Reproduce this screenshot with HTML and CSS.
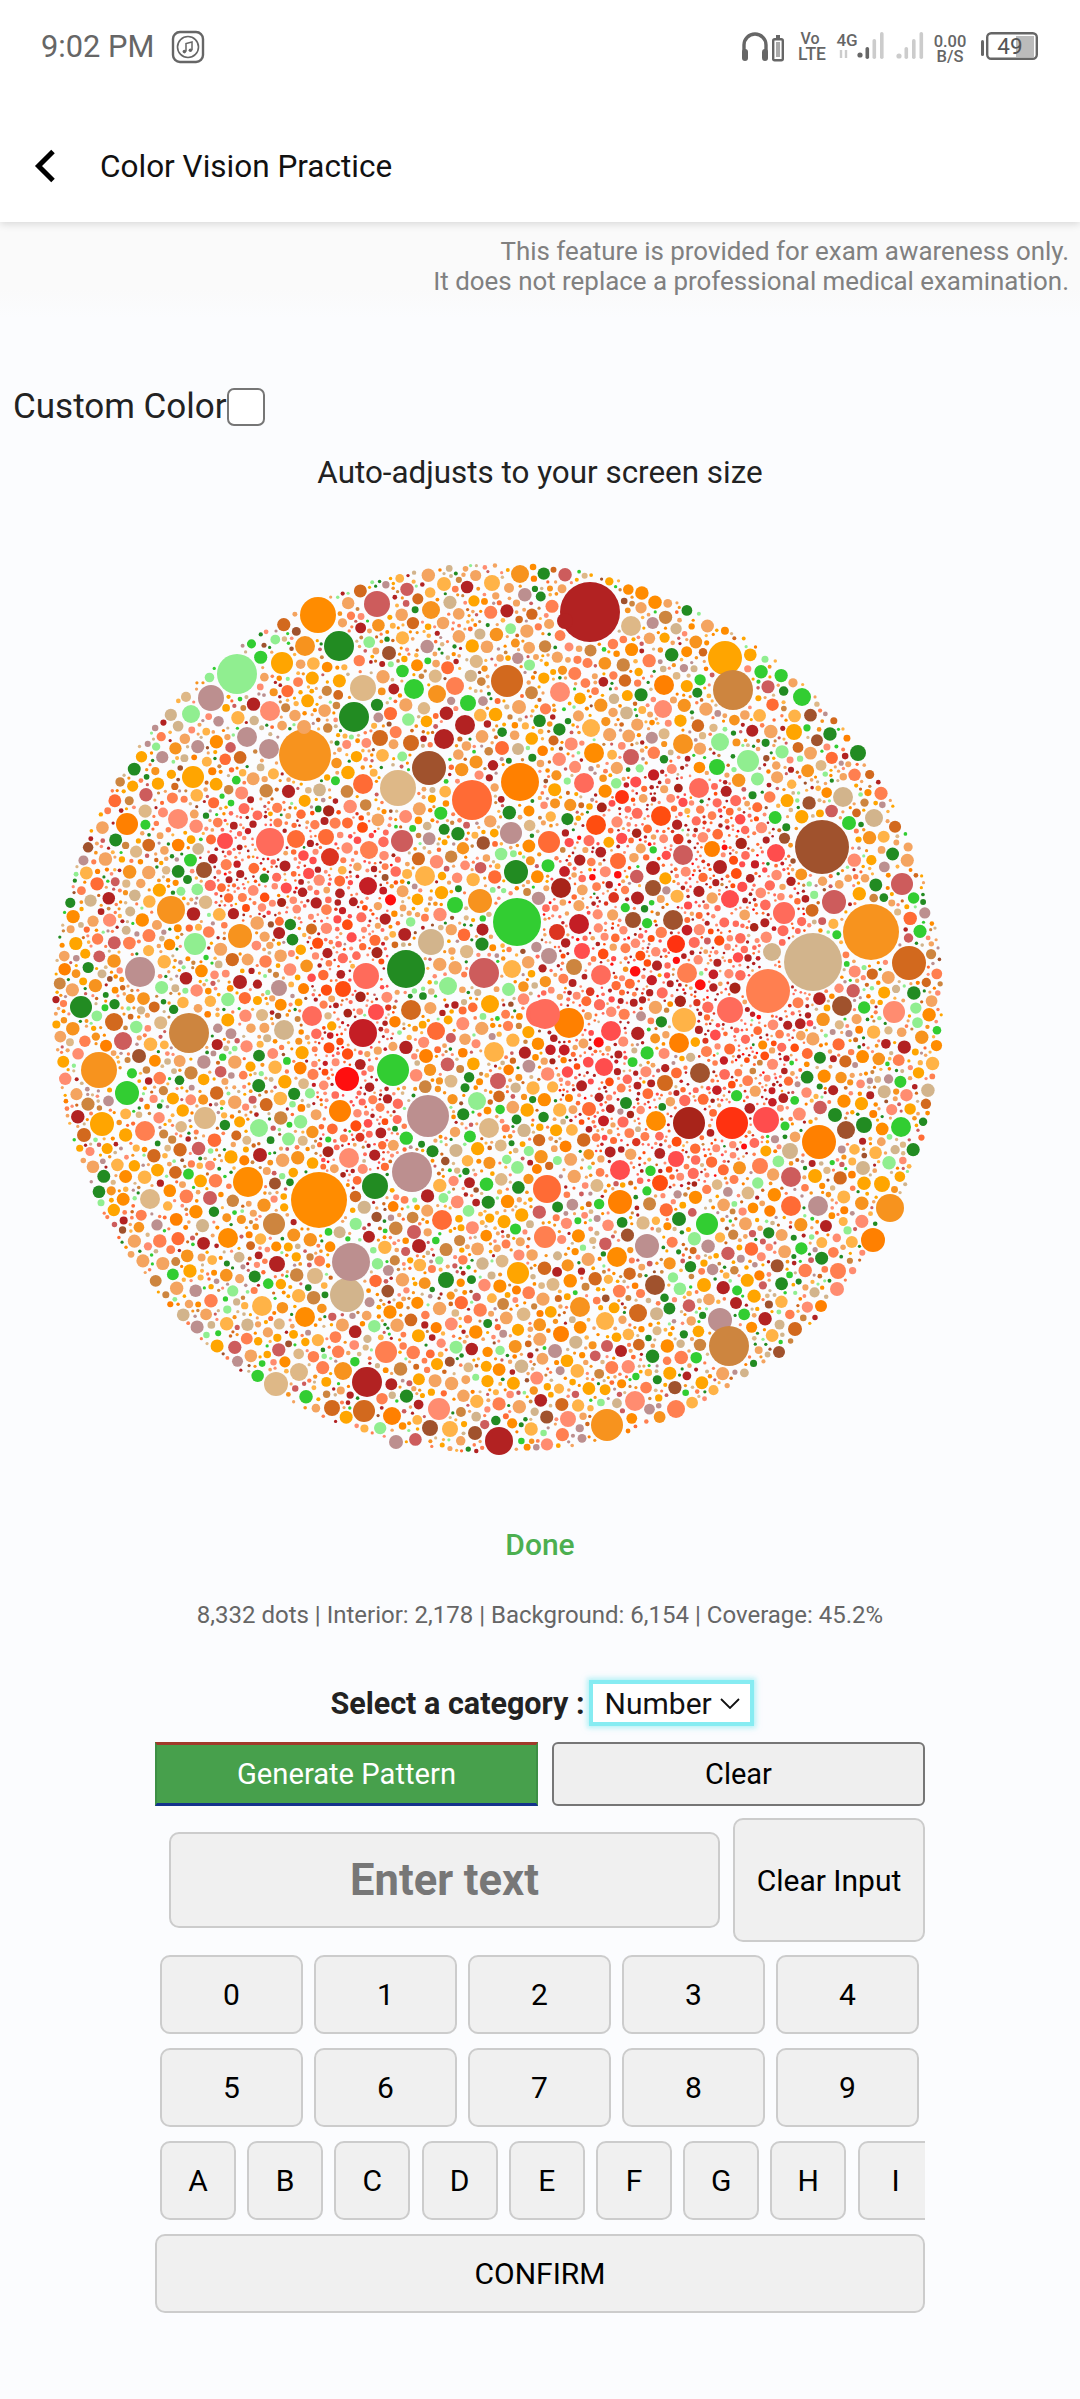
FILE: index.html
```html
<!DOCTYPE html>
<html lang="en">
<head>
<meta charset="utf-8">
<title>Color Vision Practice</title>
<link rel="stylesheet" href="styles.css">
</head>
<body>
<header class="top">
  <div class="status">
    <div class="status-left">
      <span class="time">9:02 PM</span>
      <svg class="music" width="34" height="34" viewBox="0 0 34 34" fill="none" stroke="#666">
        <rect x="2" y="2" width="30" height="30" rx="7" stroke-width="2.4"/>
        <circle cx="17" cy="17" r="10.5" stroke-width="1.6"/>
        <path d="M15 21.5V13.5l6-1.5v8" stroke-width="1.5"/>
        <circle cx="13.4" cy="21.6" r="1.8" fill="#666" stroke="none"/>
        <circle cx="19.4" cy="20.2" r="1.8" fill="#666" stroke="none"/>
      </svg>
    </div>
    <svg class="status-right" width="300" height="38" viewBox="740 28 300 38" fill="#666">
      <path d="M744 52V45a11 11 0 0 1 22 0v7" fill="none" stroke="#666" stroke-width="3.4"/>
      <rect x="742" y="49" width="6" height="12" rx="3"/>
      <rect x="762" y="49" width="6" height="12" rx="3"/>
      <rect x="776" y="35" width="4" height="3" />
      <rect x="773.2" y="39.2" width="9.6" height="21" rx="1.5" fill="none" stroke="#666" stroke-width="2.4"/>
      <rect x="776" y="42" width="4" height="15" fill="#aaa"/>
      <text class="st-text" x="810" y="43.5" text-anchor="middle" font-size="16">Vo</text>
      <text class="st-text" x="812" y="59.5" text-anchor="middle" font-size="17.5">LTE</text>
      <text class="st-text" x="847" y="45.5" text-anchor="middle" font-size="17">4G</text>
      <path d="M841 50v8M846 50v8" stroke="#ccc" stroke-width="2.4"/>
      <circle cx="860" cy="55" r="2.6"/>
      <rect x="865.5" y="47" width="3.6" height="12" rx="1.8"/>
      <rect x="872.5" y="39" width="3.6" height="20" rx="1.8" fill="#ccc"/>
      <rect x="880" y="32" width="3.6" height="27" rx="1.8" fill="#ccc"/>
      <g fill="#ccc">
        <circle cx="899" cy="56" r="2.6"/>
        <rect x="904.5" y="47" width="3.6" height="12" rx="1.8"/>
        <rect x="912" y="39" width="3.6" height="20" rx="1.8"/>
        <rect x="919.5" y="32" width="3.6" height="27" rx="1.8"/>
      </g>
      <text class="st-text" x="950" y="46.5" text-anchor="middle" font-size="16.5">0.00</text>
      <text class="st-text" x="950" y="61.5" text-anchor="middle" font-size="16.5">B/S</text>
      <rect x="981" y="40" width="3" height="16" rx="1.5"/>
      <rect x="1016" y="36" width="18" height="21" fill="#bbb"/>
      <rect x="987.2" y="33.2" width="49.6" height="25.6" rx="4" fill="none" stroke="#666" stroke-width="2.4"/>
      <text class="st-batt" x="1010" y="53.5" text-anchor="middle" font-size="22.5">49</text>
    </svg>
  </div>
  <div class="appbar">
    <svg class="back" width="24" height="34" viewBox="0 0 24 34" fill="none" stroke="#000" stroke-width="5">
      <path d="M20 2.5 5.5 17 20 31.5"/>
    </svg>
    <h1 class="title">Color Vision Practice</h1>
  </div>
</header>

<main class="content">
  <p class="notice">This feature is provided for exam awareness only.<br>It does not replace a professional medical examination.</p>
  <label class="custom">Custom Color<input class="check" type="checkbox"></label>
  <p class="hint">Auto-adjusts to your screen size</p>
  <canvas id="plate" class="plate" width="1000" height="1010"></canvas>
  <p class="done">Done</p>
  <p class="stats">8,332 dots | Interior: 2,178 | Background: 6,154 | Coverage: 45.2%</p>

  <div class="category">
    <strong class="cat-label">Select a category :</strong>
    <div class="select">Number
      <svg width="20" height="11" viewBox="0 0 20 11" fill="none" stroke="#111" stroke-width="1.8"><path d="M1 1l9 9 9-9"/></svg>
    </div>
  </div>

  <div class="panel">
    <div class="actions">
      <button class="btn-generate">Generate Pattern</button>
      <button class="btn-clear">Clear</button>
    </div>
    <div class="entry">
      <input class="text-input" placeholder="Enter text">
      <button class="key clear-input">Clear Input</button>
    </div>
    <div class="keys">
      <button class="key">0</button><button class="key">1</button><button class="key">2</button><button class="key">3</button><button class="key">4</button>
    </div>
    <div class="keys">
      <button class="key">5</button><button class="key">6</button><button class="key">7</button><button class="key">8</button><button class="key">9</button>
    </div>
    <div class="letters">
      <button class="key">A</button><button class="key">B</button><button class="key">C</button><button class="key">D</button><button class="key">E</button><button class="key">F</button><button class="key">G</button><button class="key">H</button><button class="key">I</button><button class="key">J</button><button class="key">K</button>
    </div>
    <button class="key confirm">CONFIRM</button>
  </div>
</main>
<script src="app.js"></script>
</body>
</html>
```

FILE: styles.css
```css
* { box-sizing: border-box; }
html, body { margin: 0; padding: 0; }
body {
  width: 1080px;
  height: 2399px;
  overflow: hidden;
  background: #fbfcfe;
  font-family: Roboto, "Liberation Sans", sans-serif;
  color: #222;
}
.top {
  height: 222px;
  background: #fff;
  box-shadow: 0 2px 8px rgba(0,0,0,.14);
  position: relative;
  z-index: 2;
}
.status {
  height: 92px;
  display: flex;
  justify-content: space-between;
  align-items: flex-start;
}
.status-left { display: flex; align-items: center; margin: 30px 0 0 41px; gap: 17px; }
.time { font-size: 30.8px; line-height: 34px; color: #666; }
.status-right { margin: 28px 40px 0 0; }
.st-text { font-family: Roboto, sans-serif; font-weight: 500; fill: #666; }
.st-batt { font-family: Roboto, sans-serif; fill: #555; }
.appbar { height: 130px; display: flex; align-items: flex-start; padding: 57px 0 0 33px; }
.back { flex: none; }
.title { margin: 0 0 0 43px; font-size: 31.5px; line-height: 36px; font-weight: 400; color: #111; }

.content { display: flex; flex-direction: column; }
.notice {
  margin: 0;
  padding: 15px 11px 0 0;
  height: 96px;
  text-align: right;
  font-size: 25.9px;
  line-height: 29.5px;
  color: #808080;
  background: linear-gradient(#fafafa 70%, #fbfcfe);
}
.custom {
  display: flex;
  align-items: center;
  margin: 70px 0 0 13px;
  height: 38px;
  font-size: 35px;
  line-height: 38px;
  color: #222;
}
.check {
  appearance: none;
  margin: 0;
  width: 38px;
  height: 38px;
  background: #fff;
  border: 2.5px solid #767676;
  border-radius: 7px;
}
.hint { margin: 29px 0 0; text-align: center; font-size: 31.4px; line-height: 36px; color: #222; }
.plate { display: block; width: 1000px; height: 1010px; margin-top: 8px; }
.done { margin: 18px 0 0; text-align: center; font-size: 30px; line-height: 36px; font-weight: 500; color: #4caf50; }
.stats { margin: 37px 0 0; text-align: center; font-size: 24px; line-height: 30px; color: #666; }

.category {
  display: flex;
  justify-content: center;
  align-items: center;
  gap: 8px;
  margin-top: 54px;
  height: 38px;
}
.cat-label { font-size: 30.5px; font-weight: 700; color: #222; }
.select {
  width: 157px;
  height: 38px;
  display: flex;
  align-items: center;
  justify-content: space-between;
  padding: 0 10px 0 12px;
  background: #fff;
  font-size: 30px;
  color: #111;
  box-shadow: 0 0 0 4px #86ecf2, 0 0 5px 6px rgba(120,232,240,.55);
}
.panel { width: 770px; margin: 20px auto 0; display: flex; flex-direction: column; }
.actions { display: flex; justify-content: space-between; }
button { font-family: Roboto, "Liberation Sans", sans-serif; color: #000; padding: 0; }
.btn-generate {
  width: 383px;
  height: 64px;
  font-size: 29.2px;
  color: #fff;
  background: #47a04c;
  border-style: solid;
  border-width: 3px 2px;
  border-color: #a03a2a #3d8f45 #14328c #3d8f45;
}
.btn-clear {
  width: 373px;
  height: 64px;
  font-size: 29px;
  background: #efefef;
  border: 2.5px solid #767676;
  border-radius: 6px;
}
.entry { display: flex; align-items: center; justify-content: space-between; padding-left: 14px; margin-top: 12px; }
.text-input {
  width: 551px;
  height: 96px;
  font-family: Roboto, "Liberation Sans", sans-serif;
  font-size: 43.5px;
  font-weight: 700;
  text-align: center;
  background: #f0f0f0;
  border: 2.5px solid #ccc;
  border-radius: 10px;
  outline: none;
}
.text-input::placeholder { color: #777; opacity: 1; }
.key {
  background: #f0f0f0;
  border: 2.5px solid #ccc;
  border-radius: 10px;
  font-size: 30px;
  color: #000;
}
.clear-input { width: 192px; height: 124px; font-size: 30px; }
.keys { display: flex; gap: 11px; padding: 0 5px; margin-top: 14px; }
.keys .key { width: 143px; height: 79px; flex: none; }
.entry + .keys { margin-top: 13px; }
.letters { display: flex; gap: 11.2px; padding-left: 5px; margin-top: 14px; overflow: hidden; }
.letters .key { width: 76px; height: 79px; flex: none; }
.confirm { width: 770px; height: 79px; margin-top: 14px; }
```

FILE: app.js
```js
(function () {
  var cv = document.getElementById('plate');
  var ctx = cv.getContext('2d');
  var OY = 500, CX = 498, CY = 1009, R = 446;

  var c = {
    o: '#ff8c00', f: '#f7931e', a: '#ffa500', y: '#ffb347', p: '#cd853f', h: '#d2691e', s: '#a0522d',
    b: '#deb887', t: '#d2b48c', q: '#bc8f8f', i: '#cd5c5c', r: '#b22222', g: '#228b22', l: '#32cd32',
    m: '#90ee90', n: '#f4a460', k: '#ff7f50', e: '#ff8c70', u: '#ff6b35', w: '#ff6b5b', x: '#ff4d4d',
    d: '#ff4d10', z: '#ff3210', v: '#c41e25', j: '#ff0f0f', c: '#dc3420', B: '#a8241a', O: '#ff8000'
  };

  var big = "318,616,18,o 377,605,13,i 339,647,15,g 305,647,10,f 282,664,11,a 237,675,20,m 211,699,13,q 191,715,9,m 363,689,13,b 354,718,15,g 414,690,10,l 507,682,16,h 305,756,26,f 304,728,7,n 247,738,10,q 269,750,10,q 270,712,10,e 193,778,11,a 127,825,11,O 178,820,10,e 398,789,18,b 429,769,17,s 472,801,20,u 520,783,19,O 363,785,10,u 465,726,10,r 444,740,10,r 402,842,11,i 270,843,14,w 296,840,9,u 326,838,8,u 225,842,8,x 330,858,9,c 369,851,9,k 511,834,11,q 516,873,12,g 425,877,10,y 368,887,9,v 204,871,8,s 171,911,14,f 480,902,12,f 517,923,24,l 455,906,8,l 431,943,13,t 406,970,19,g 366,977,13,w 484,974,15,i 448,987,9,m 140,973,15,q 240,937,12,f 195,945,11,m 189,1034,20,p 363,1034,14,v 312,1017,10,w 81,1008,11,g 114,1023,9,h 284,1031,10,t 123,1042,9,i 411,1011,10,h 436,1032,9,u 490,1005,9,a 512,970,9,y 539,1015,13,w 240,983,7,r 279,989,8,q 343,990,8,d 376,1013,8,x 437,695,9,f 455,687,9,k 380,739,8,h 411,744,8,h 389,654,7,s 468,704,8,l 519,708,7,n 431,611,9,f 520,575,9,f 492,584,8,y 444,585,7,y 502,749,7,u 518,750,6,t " +
  "590,613,30,r 565,622,8,r 631,627,10,b 725,659,17,a 733,691,20,p 802,698,9,l 664,686,10,O 560,693,10,e 663,710,9,e 683,745,10,f 591,729,9,y 594,754,10,o 631,758,8,i 748,762,11,m 720,743,9,m 717,768,8,l 794,733,8,a 858,754,8,g 584,784,10,w 699,789,10,w 843,798,10,t 874,819,9,t 822,848,27,s 849,824,7,l 622,798,7,z 661,817,10,d 596,826,10,d 549,843,11,u 683,856,10,i 712,850,8,O 776,854,9,x 653,869,7,r 720,868,7,r 561,889,10,B 653,889,8,s 618,862,8,u 730,900,9,x 834,903,12,i 902,885,11,i 871,933,28,f 813,963,29,t 909,964,17,h 768,992,22,k 784,914,11,w 772,953,9,t 579,925,10,v 557,933,8,c 633,921,8,s 673,921,10,s 676,945,9,z 549,957,8,q 582,952,8,x 574,968,8,p 601,976,10,w 687,974,10,k 894,1013,11,e 842,1007,10,s 730,1011,13,w 684,1021,12,y 569,1024,15,O 545,1015,15,w 611,1032,10,x 679,1044,10,O " +
  "99,1071,18,f 127,1094,12,l 102,1125,12,a 145,1132,10,k 205,1119,11,b 259,1129,9,m 393,1071,16,l 347,1080,12,j 340,1112,11,O 428,1117,21,q 412,1173,20,q 375,1187,13,g 248,1183,15,o 319,1201,28,o 347,1296,17,t 351,1263,19,q 477,1102,9,m 349,1159,10,e 260,1156,7,r 274,1225,11,p 228,1239,10,o 277,1265,8,r 315,1277,8,b 262,1307,10,y 305,1318,10,o 276,1385,12,b 299,1373,9,b 343,1372,9,f 367,1383,15,r 386,1353,11,k 332,1409,8,h 364,1412,11,h 392,1417,9,O 439,1410,11,e 499,1442,14,r 430,1429,8,s 475,1434,7,s 396,1443,7,q 450,1430,8,y 518,1274,11,a 489,1129,10,b 446,1281,8,g 442,1221,10,u 414,1233,7,i 419,1247,7,r 494,1053,10,y 426,1057,7,O 150,1200,10,b 210,1199,7,i 139,1057,7,s 84,1136,7,h 498,1082,8,i " +
  "689,1124,16,B 732,1124,16,z 766,1121,13,x 819,1143,17,O 901,1128,10,l 864,1126,8,g 835,1116,7,g 846,1131,9,s 656,1122,10,o 620,1203,12,O 707,1225,11,l 679,1220,7,g 647,1247,12,q 617,1258,10,o 655,1286,10,s 580,1308,10,f 605,1322,9,y 638,1314,9,h 720,1321,12,q 729,1347,20,p 890,1209,14,f 873,1241,12,O 818,1207,10,q 791,1207,10,u 791,1178,10,i 815,1177,7,a 790,1152,8,t 863,1169,7,t 882,1185,8,a 700,1074,10,s 665,1084,8,h 604,1068,9,x 589,1110,7,u 626,1104,6,g 620,1171,10,x 676,1160,8,x 660,1184,8,d 760,1167,8,k 547,1190,14,u 545,1238,11,k 607,1426,16,f 635,1402,10,e 676,1410,9,k 568,1420,8,e 555,1352,7,q 561,1335,8,O 607,1347,6,i 621,1352,6,r 779,1353,6,s 795,1330,7,h 736,1304,6,r 838,1272,8,k 837,1290,7,e 821,1307,6,O 704,1286,7,a";

  var bgPal = 'ooofffaaaayyypphhsnnnnbbttqqiirrgggllmmnnkkkeeeuO'.split('');
  var inPal = 'wwwwxxxkkkeeeeuuuuddrrrrvvcjBnnnwwrre'.split('');

  var seed = 20240613;
  function rnd() { seed = (seed * 1664525 + 1013904223) >>> 0; return seed / 4294967296; }

  function seg(x, y, ax, ay, bx, by) {
    var dx = bx - ax, dy = by - ay;
    var t = ((x - ax) * dx + (y - ay) * dy) / (dx * dx + dy * dy);
    t = Math.max(0, Math.min(1, t));
    return Math.hypot(x - ax - t * dx, y - ay - t * dy);
  }
  function interior(x, y) {
    if (seg(x, y, 255, 865, 345, 870) < 58) return true;
    if (seg(x, y, 345, 880, 358, 1145) < 42) return true;
    var ex = (x - 675) / 140, ey = (y - 978) / 212;
    if (ex * ex + ey * ey < 1) {
      if (Math.hypot(x - 650, y - 895) < 30) return false;
      if (Math.hypot(x - 665, y - 1040) < 36) return false;
      return true;
    }
    return false;
  }

  var CELL = 14, grid = {};
  function key(i, j) { return i * 4096 + j; }
  function add(o) {
    var x0 = Math.floor((o.x - o.r) / CELL), x1 = Math.floor((o.x + o.r) / CELL);
    var y0 = Math.floor((o.y - o.r) / CELL), y1 = Math.floor((o.y + o.r) / CELL);
    for (var i = x0; i <= x1; i++) for (var j = y0; j <= y1; j++) {
      var k = key(i, j);
      (grid[k] || (grid[k] = [])).push(o);
    }
  }
  function free(x, y, r, gap) {
    var m = r + gap;
    var x0 = Math.floor((x - m) / CELL), x1 = Math.floor((x + m) / CELL);
    var y0 = Math.floor((y - m) / CELL), y1 = Math.floor((y + m) / CELL);
    for (var i = x0; i <= x1; i++) for (var j = y0; j <= y1; j++) {
      var l = grid[key(i, j)];
      if (!l) continue;
      for (var n = 0; n < l.length; n++) {
        var o = l[n], d = r + o.r + gap, dx = x - o.x, dy = y - o.y;
        if (dx * dx + dy * dy < d * d) return false;
      }
    }
    return true;
  }

  var dots = [];
  big.split(' ').forEach(function (s) {
    var p = s.split(',');
    var o = { x: +p[0], y: +p[1], r: +p[2], col: c[p[3]] };
    dots.push(o); add(o);
  });

  var cands = [];
  for (var n = 0; n < 70000; n++) {
    var a = rnd() * Math.PI * 2, rr = Math.sqrt(rnd()) * R;
    var x = CX + Math.cos(a) * rr, y = CY + Math.sin(a) * rr;
    var inside = interior(x, y), u = rnd(), r;
    if (inside) r = 1.3 + 4.4 * Math.pow(u, 6);
    else r = 1.6 + 5.2 * Math.pow(u, 5);
    if (rr + r > R) continue;
    cands.push({ x: x, y: y, r: r, inside: inside });
  }
  cands.sort(function (p, q) { return q.r - p.r; });

  for (var i = 0; i < cands.length; i++) {
    var o = cands[i];
    var gap = o.inside ? 1.1 : 1.2;
    if (!free(o.x, o.y, o.r, gap)) continue;
    var pal = o.inside && rnd() < 0.93 ? inPal : bgPal;
    o.col = c[pal[Math.floor(rnd() * pal.length)]];
    dots.push(o); add(o);
  }

  dots.forEach(function (o) {
    ctx.fillStyle = o.col;
    ctx.beginPath();
    ctx.arc(o.x, o.y - OY, o.r, 0, Math.PI * 2);
    ctx.fill();
  });
})();
```
